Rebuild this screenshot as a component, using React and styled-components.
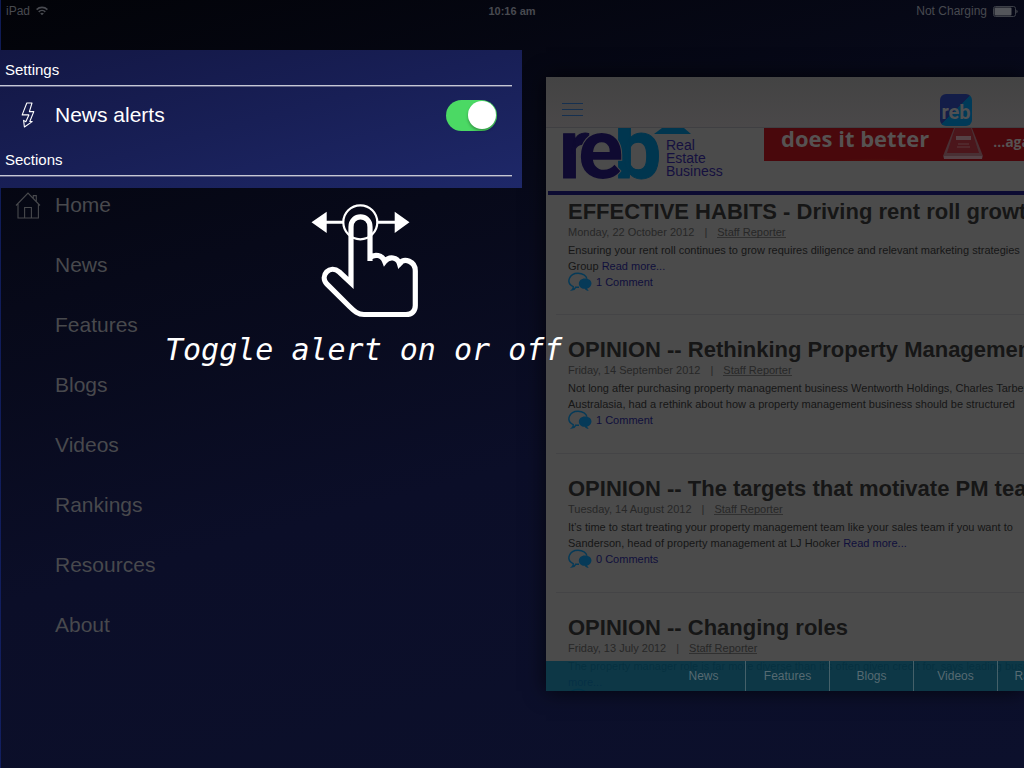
import React from "react";
import styled, { createGlobalStyle } from "styled-components";

const Global = createGlobalStyle`
  *, *::before, *::after { box-sizing: border-box; }
  body {
    margin: 0;
    font-family: "Liberation Sans", Arial, sans-serif;
    background: #0a0d24;
  }
  h1, h2, p, ul { margin: 0; padding: 0; }
  ul { list-style: none; }
  a { color: inherit; text-decoration: none; }
`;

const Screen = styled.div`
  position: relative;
  min-height: 100vh;
  overflow: hidden;
  background:
    linear-gradient(#0f1b55, #121f60) left / 1px 100% no-repeat,
    linear-gradient(165deg, #020308 0%, #070919 30%, #0b0e28 58%, #0c102c 100%);
`;

const StatusBar = styled.header`
  display: grid;
  grid-template-columns: 1fr auto 1fr;
  align-items: center;
  height: 22px;
  padding: 0 6px;
  font-size: 12px;
  color: #484a50;
`;

const StatusGroup = styled.div`
  display: flex;
  align-items: center;
  gap: 6px;
  justify-content: ${(p) => (p.$end ? "flex-end" : "flex-start")};
`;

const Clock = styled.time`
  font-size: 11px;
  font-weight: bold;
`;

const Body = styled.div`
  display: grid;
  grid-template-columns: 522px minmax(0, 1fr);
  column-gap: 24px;
  padding-top: 28px;
`;

const SettingsPanel = styled.section`
  position: relative;
  z-index: 1;
  height: 138px;
  padding-right: 10px;
  color: #fff;
  background: linear-gradient(165deg, #131744 0%, #181f56 50%, #1e2869 100%);
`;

const GroupTitle = styled.h2`
  height: 36px;
  padding: 0 5px;
  border-bottom: 1px solid #c6c8d6;
  box-shadow: 0 1px 0 #5f6288;
  font-size: 15px;
  font-weight: normal;
  line-height: 39px;
`;

const SettingRow = styled.div`
  display: grid;
  grid-template-columns: 55px 1fr auto;
  align-items: center;
  height: 54px;
  padding: 4px 15px 0 0;
  font-size: 21px;
`;

const RowIcon = styled.span`
  display: flex;
  justify-content: center;
`;

const Switch = styled.input`
  appearance: none;
  width: 51px;
  height: 31px;
  margin: 0;
  border-radius: 16px;
  background: #4bd964;
  display: flex;
  align-items: center;
  justify-content: flex-end;
  padding: 0 1px;
  &::before {
    content: "";
    width: 28px;
    height: 28px;
    border-radius: 50%;
    background: #fff;
    box-shadow: 0 2px 3px rgba(0, 0, 0, 0.3);
  }
  &:not(:checked) {
    justify-content: flex-start;
    background: #777;
  }
`;

const Menu = styled.nav`
  margin-top: -13px;
`;

const MenuLink = styled.a`
  display: grid;
  grid-template-columns: 55px 1fr;
  align-items: center;
  height: 60px;
  font-size: 21px;
  color: #48494d;
`;

const Card = styled.main`
  position: relative;
  height: 80vh;
  margin-top: 27px;
  overflow: hidden;
  color: #161616;
  background: #4b4b4b;
  box-shadow: 0 0 20px rgba(0, 0, 0, 0.7);
`;

const CardBar = styled.div`
  display: flex;
  align-items: flex-end;
  height: 51px;
  padding: 0 52px 1px 16px;
  justify-content: space-between;
  border-bottom: 1px solid #3f3f42;
  background: linear-gradient(#434343, #4a4849);
`;

const MenuButton = styled.button`
  display: flex;
  padding: 0 0 9px;
  border: 0;
  background: none;
`;

const AppIcon = styled.div`
  width: 32px;
  height: 32px;
  border-radius: 6px;
  background: linear-gradient(135deg, #131d48 0 50%, #003a58 50%);
  color: #4f5052;
  font: bold 20px/36px Roboto, sans-serif;
  text-align: center;
`;

const Masthead = styled.div`
  display: flex;
  height: 63px;
  padding-left: 14px;
`;

const Logo = styled.svg`
  flex: none;
`;

const Tagline = styled.p`
  flex: none;
  width: 98px;
  margin-top: 11px;
  font-size: 14px;
  line-height: 13px;
  color: #15103f;
`;

const Banner = styled.div`
  display: flex;
  flex: none;
  align-items: flex-start;
  width: 400px;
  height: 33px;
  padding-left: 17px;
  overflow: hidden;
  background: radial-gradient(ellipse at 110px 40px, #52200c 0, #49080c 70px);
  color: #565252;
  font: bold 22px/20px "Open Sans", sans-serif;
`;

const Trophy = styled.svg`
  flex: none;
  margin: 0 9px 0 13px;
`;

const BannerTail = styled.span`
  font-size: 14px;
  line-height: 28px;
`;

const Rule = styled.div`
  height: 4px;
  margin: 0 0 1px 2px;
  background: #0c0b32;
`;

const ArticleBox = styled.article`
  height: 139px;
  margin-left: 10px;
  padding: 22px 0 0 12px;
  border-bottom: 1px solid #444446;
  font-size: 11px;
  line-height: 16px;
  white-space: nowrap;
  &:first-of-type {
    height: 119px;
    padding-top: 3px;
  }
`;

const ArticleTitle = styled.h1`
  font-size: 22px;
  line-height: 26px;
`;

const Meta = styled.p`
  display: flex;
  align-items: flex-start;
  gap: 10px;
  height: 14px;
  margin-bottom: 3px;
  line-height: 14px;
  color: #272727;
`;

const Author = styled.a`
  height: 13px;
  border-bottom: 1px solid #303030;
`;

const Link = styled.a`
  color: #100f3c;
`;

const Comments = styled(Link)`
  display: flex;
  align-items: center;
  gap: 4px;
  height: 16px;
`;

const TabBar = styled.nav`
  position: absolute;
  left: 0;
  right: 0;
  bottom: 0;
  display: flex;
  height: 30px;
  padding-left: 116px;
  overflow: hidden;
  background: rgba(3, 52, 70, 0.86);
`;

const Tab = styled.a`
  flex: none;
  width: 84px;
  border-right: 1px solid #456069;
  color: #566a72;
  font-size: 12px;
  line-height: 31px;
  text-align: center;
`;

const Hint = styled.div`
  position: absolute;
  z-index: 2;
  top: 200px;
  left: 165px;
  color: #fff;
  pointer-events: none;
`;

const HandDrawing = styled.svg`
  display: block;
  margin-left: 145px;
`;

const HintText = styled.p`
  font: italic 30px/60px "DejaVu Sans Mono", monospace;
  white-space: pre;
`;

const sections = ["Home", "News", "Features", "Blogs", "Videos", "Rankings", "Resources", "About"];
const tabs = ["News", "Features", "Blogs", "Videos", "Rankings"];

const articles = [
  {
    title: "EFFECTIVE HABITS - Driving rent roll growth",
    date: "Monday, 22 October 2012",
    first: "Ensuring your rent roll continues to grow requires diligence and relevant marketing strategies",
    second: "Group ",
    comments: "1 Comment",
  },
  {
    title: "OPINION -- Rethinking Property Management",
    date: "Friday, 14 September 2012",
    first: "Not long after purchasing property management business Wentworth Holdings, Charles Tarbey",
    second: "Australasia, had a rethink about how a property management business should be structured",
    comments: "1 Comment",
    noMore: true,
  },
  {
    title: "OPINION -- The targets that motivate PM teams",
    date: "Tuesday, 14 August 2012",
    first: "It’s time to start treating your property management team like your sales team if you want to",
    second: "Sanderson, head of property management at LJ Hooker ",
    comments: "0 Comments",
  },
  {
    title: "OPINION -- Changing roles",
    date: "Friday, 13 July 2012",
    first: "The property manager role is far more diverse than it’s often given credit for, says leading business",
    second: "",
    more: "more...",
    comments: "0 Comments",
  },
];

function Wifi() {
  return (
    <svg width="12" height="10" viewBox="0 0 12 10" fill="none" stroke="currentColor" strokeWidth="1.6">
      <path d="M0.6 3.6C3.6.6 8.4.6 11.4 3.6M2.7 5.8c1.9-1.8 4.7-1.8 6.6 0" />
      <path d="M6 9.2 4.2 7.4c1-.9 2.6-.9 3.6 0z" fill="currentColor" stroke="none" />
    </svg>
  );
}

function Battery() {
  return (
    <svg width="25" height="11" viewBox="0 0 25 11">
      <rect x=".5" y=".5" width="22" height="10" rx="2" fill="none" stroke="#3d4048" />
      <rect x="1.5" y="1.5" width="17" height="8" rx="1" fill="#54565b" />
      <path d="M23.5 3.8c1.4.4 1.4 3 0 3.4z" fill="#54565b" />
    </svg>
  );
}

function Bolt() {
  return (
    <svg width="14" height="26" viewBox="0 0 14 26" fill="none" stroke="#fff" strokeWidth="1.1" strokeLinejoin="round">
      <path d="M5.8 1H11L8.4 9.600h4.400L8.800 19.500l2.400.1L3.400 25 2.600 18.400l2.200 1.300 3.100-6.800H1.200z" />
    </svg>
  );
}

function House() {
  return (
    <svg width="26" height="27" viewBox="0 0 26 27" fill="none" stroke="currentColor" strokeWidth="1.1">
      <path d="M1 13.5 13 1l12 12.500M3 11.500V26h20.400V11.500M9.600 26V15.500h6.800V26M18.300 6.300V3.600h3v5.800" />
    </svg>
  );
}

function Bubbles() {
  return (
    <svg width="24" height="20" viewBox="0 0 24 20">
      <path
        d="M11 15.200c-1 .1-2 .1-3.100-.1-.8 1.600-2 2.500-3.900 2.800 1-.9 1.400-2 1.200-3.300C-2.600 11 1.200 1.200 10 1.200c4.900 0 8.300 2.600 8.900 5.500"
        fill="none"
        stroke="#063a58"
        strokeWidth="1.400"
      />
      <path d="M17 6.500c8.200 0 8.200 8.700 2.200 10.100.2 1 .8 1.700 1.600 2.300-1.900 0-3.200-.7-4-2.100C8.700 16.500 9 6.500 17 6.500z" fill="#063a58" />
    </svg>
  );
}

function RebLogo() {
  return (
    <Logo width="106" height="63" viewBox="0 0 106 63" fontFamily="Roboto, sans-serif" fontWeight="bold" fontSize="84">
      <text x="-1" y="50" fill="#0f0a31" stroke="#0f0a31" strokeWidth="1">r</text>
      <text x="54" y="50" fill="#00364f" stroke="#00364f" strokeWidth="1">b</text>
      <text x="18" y="50" fill="#0f0a31" stroke="#4b4b4b" strokeWidth="2" paintOrder="stroke">e</text>
    </Logo>
  );
}

const Roof = styled.svg`
  display: block;
  height: 6px;
  margin: -11px 0 5px -12px;
`;

function Hand() {
  return (
    <HandDrawing width="110" height="120" viewBox="0 0 110 120" fill="none" stroke="#fff">
      <path d="M1.500 22.300 16.700 11.700v21.200zM99.500 22.300 84.700 11.700v21.200z" fill="#fff" stroke="none" />
      <path d="M16 22.300h17M67.500 22.300h18" strokeWidth="3" />
      <circle cx="50.300" cy="22.300" r="17" strokeWidth="2.200" />
      <path
        strokeWidth="5.200"
        d="M60 61V27c0-13.500-19-13.500-19 0v56L29.300 72C20 64 9 75.500 17 84.200L39.500 106.500c5 5 8.500 8 14.500 8h42c6 0 9.300-3.500 9.300-9V71c0-10-11-13.500-15.900-7.500C87.500 57 79 56 74.700 61.500 72 54.500 64.500 54 60 57.500"
      />
      <path d="M73 58.500 74.500 65l4-4zM88 61l1.500 6.500 4-4z" fill="#fff" stroke="none" />
    </HandDrawing>
  );
}

export default function App() {
  return (
    <Screen>
      <Global />
      <StatusBar>
        <StatusGroup>iPad <Wifi /></StatusGroup>
        <Clock>10:16 am</Clock>
        <StatusGroup $end>Not Charging <Battery /></StatusGroup>
      </StatusBar>
      <Body>
        <div>
          <SettingsPanel>
            <GroupTitle>Settings</GroupTitle>
            <SettingRow>
              <RowIcon><Bolt /></RowIcon>
              <label htmlFor="news-alerts">News alerts</label>
              <Switch id="news-alerts" type="checkbox" role="switch" defaultChecked />
            </SettingRow>
            <GroupTitle>Sections</GroupTitle>
          </SettingsPanel>
          <Menu>
            {sections.map((name) => (
              <MenuLink key={name} href="#">
                <RowIcon>{name === "Home" && <House />}</RowIcon>
                {name}
              </MenuLink>
            ))}
          </Menu>
        </div>
        <Card>
          <CardBar>
            <MenuButton aria-label="Menu">
              <svg width="21" height="15" viewBox="0 0 21 15" stroke="#16304f" strokeWidth="1">
                <path d="M0 1.500h21M0 7.500h21M0 13.500h21" />
              </svg>
            </MenuButton>
            <AppIcon>reb</AppIcon>
          </CardBar>
          <Masthead>
            <RebLogo />
            <Tagline>
              <Roof width="38" height="6" viewBox="0 0 38 6">
                <path d="M0 6 8 0h22l7 6z" fill="#00364f" />
              </Roof>
              Real<br />Estate<br />Business
            </Tagline>
            <Banner>
              does it better
              <Trophy width="42" height="32" viewBox="0 0 42 32">
                <path d="M12 0h18l11 28-1 3H2l-1-3z" fill="#493034" />
                <path d="M13 0h16l8 25H5z" fill="#4b161b" />
                <path d="M14 8h15v4H14zM2 28h38v3H2z" fill="#554246" />
                <path d="M16 16h11M15 19h13" stroke="#59383c" />
              </Trophy>
              <BannerTail>...again</BannerTail>
            </Banner>
          </Masthead>
          <Rule />
          {articles.map((a) => (
            <ArticleBox key={a.title}>
              <ArticleTitle>{a.title}</ArticleTitle>
              <Meta>
                <span>{a.date}</span>
                <span>|</span>
                <Author href="#">Staff Reporter</Author>
              </Meta>
              <p>
                {a.first}
                <br />
                {a.second}
                {!a.noMore && <Link href="#">{a.more || "Read more..."}</Link>}
              </p>
              <Comments href="#"><Bubbles />{a.comments}</Comments>
            </ArticleBox>
          ))}
          <TabBar>
            {tabs.map((name) => <Tab key={name} href="#">{name}</Tab>)}
          </TabBar>
        </Card>
      </Body>
      <Hint>
        <Hand />
        <HintText>Toggle alert on or off</HintText>
      </Hint>
    </Screen>
  );
}
